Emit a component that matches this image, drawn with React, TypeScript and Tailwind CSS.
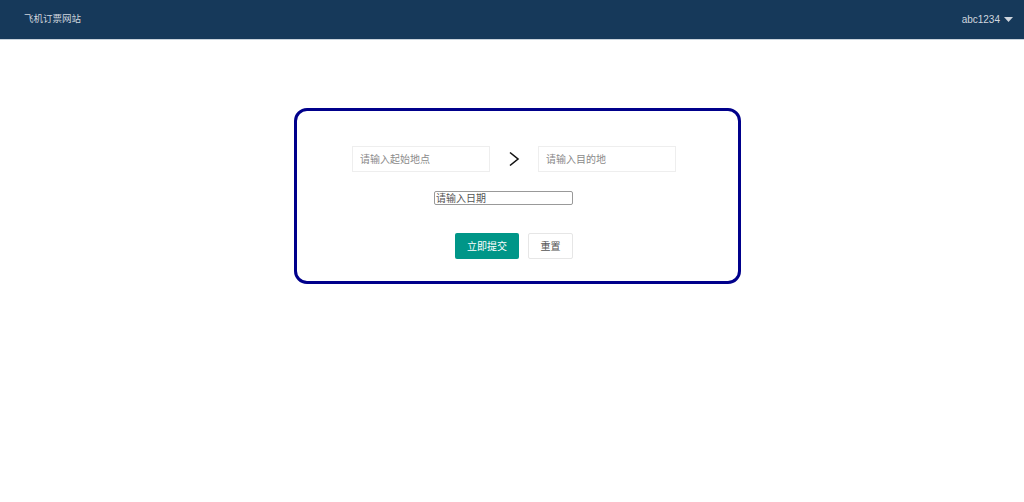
export default function App() {
  return (
    <div className="min-h-screen bg-white font-['Liberation_Sans','Noto_Sans_CJK_SC',sans-serif] text-[10px]">
      <header className="h-[40px] bg-[#16395a] border-b border-[#c9d3dc] flex items-center justify-between pl-[24px] pr-[11px]">
        <span className="text-[#cfd6de] text-[9.5px]">飞机订票网站</span>
        <span className="flex items-center gap-[4px] text-[#cfd6de] text-[10px]">
          abc1234
          <svg width="9" height="5" viewBox="0 0 9 5">
            <path d="M0 0h9L4.5 5z" fill="#cfd6de" />
          </svg>
        </span>
      </header>

      <main className="pt-[68px]">
        <div className="ml-[294px] w-[447px] h-[176px] border-[3px] border-[#00008b] rounded-[13px] pt-[35px]">
          <div className="flex items-center ml-[55px]">
            <input
              className="w-[138px] h-[26px] border border-[#eeeeee] px-[7px] outline-none placeholder:text-[#8a8a8a] text-[10px]"
              placeholder="请输入起始地点"
            />
            <div className="w-[48px] flex justify-center">
              <svg width="12" height="16" viewBox="0 0 12 16">
                <path d="M2 1.5L10 8L2 14.5" fill="none" stroke="#111" strokeWidth="1.6" />
              </svg>
            </div>
            <input
              className="w-[138px] h-[26px] border border-[#eeeeee] px-[7px] outline-none placeholder:text-[#8a8a8a] text-[10px]"
              placeholder="请输入目的地"
            />
          </div>

          <div className="ml-[137px] mt-[19px]">
            <input
              className="block w-[139px] h-[14px] border border-[#999] rounded-[2px] px-[1px] outline-none placeholder:text-[#555] text-[10px] leading-none"
              placeholder="请输入日期"
            />
          </div>

          <div className="ml-[158px] mt-[28px] flex gap-[9px]">
            <button className="w-[64px] h-[26px] bg-[#009688] text-white text-[10px] rounded-[2px]">立即提交</button>
            <button className="w-[45px] h-[26px] bg-white border border-[#e6e6e6] text-[#555] text-[10px] rounded-[2px]">重置</button>
          </div>
        </div>
      </main>
    </div>
  );
}
